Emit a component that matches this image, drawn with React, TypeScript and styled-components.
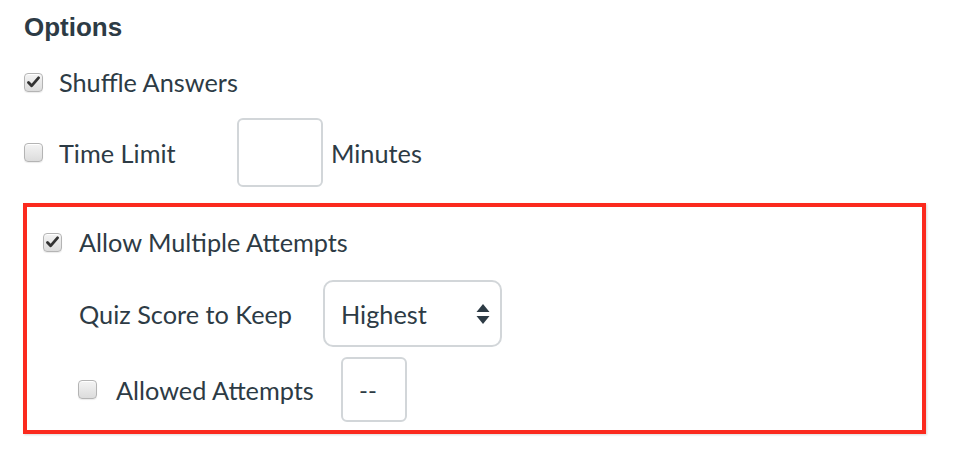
import React from "react";
import styled, { createGlobalStyle } from "styled-components";

const Global = createGlobalStyle`
  html, body { margin: 0; padding: 0; background: #ffffff; }
  body { font-family: Lato, "Noto Sans", sans-serif; color: #2d3b45; }
`;

const Page = styled.div`
  width: 954px;
  height: 450px;
  box-sizing: border-box;
  padding: 12px 0 0 24px;
  display: flex;
  flex-direction: column;
`;

const Heading = styled.h2`
  margin: 0;
  font-family: "Liberation Sans", Arial, sans-serif;
  font-weight: 700;
  font-size: 26px;
  line-height: 30px;
  color: #2d3b45;
`;

const Row = styled.div<{ $h: number; $mt: number; $pl?: number }>`
  display: flex;
  align-items: center;
  height: ${(p) => p.$h}px;
  margin-top: ${(p) => p.$mt}px;
  padding-left: ${(p) => p.$pl ?? 0}px;
`;

const Label = styled.span<{ $gap: number; $w?: number }>`
  font-size: 25.3px;
  line-height: 30px;
  margin-left: ${(p) => p.$gap}px;
  ${(p) => (p.$w ? `width: ${p.$w}px;` : "")}
  white-space: nowrap;
`;

const Box = styled.span`
  width: 19px;
  height: 19px;
  box-sizing: border-box;
  border: 1px solid #b4b4b4;
  border-radius: 4px;
  background: linear-gradient(#f4f4f4, #dcdcdc);
  box-shadow: inset 0 1px 0 #fff, 0 1px 1px rgba(0, 0, 0, 0.08);
  display: inline-flex;
  align-items: center;
  justify-content: center;
  flex: none;
`;

const TextBox = styled.div<{ $w: number; $h: number }>`
  width: ${(p) => p.$w}px;
  height: ${(p) => p.$h}px;
  box-sizing: border-box;
  border: 2px solid #d2d6d9;
  border-radius: 6px;
  background: #fff;
  display: flex;
  align-items: center;
  padding-left: 16px;
  font-size: 24px;
  color: #2d3b45;
  flex: none;
`;

const After = styled.span`
  font-size: 25.3px;
  margin-left: 8px;
`;

const Highlight = styled.div`
  margin: 16px 0 0 -1px;
  width: 903px;
  height: 231px;
  box-sizing: border-box;
  border: 4px solid #fb2a1e;
  box-shadow: 1px 1px 2px rgba(0, 0, 0, 0.15);
  padding: 15px 0 8px 16px;
  display: flex;
  flex-direction: column;
`;

const Select = styled.div`
  width: 179px;
  height: 67px;
  box-sizing: border-box;
  border: 2px solid #d2d6d9;
  border-radius: 10px;
  display: flex;
  align-items: center;
  justify-content: space-between;
  padding: 0 10px 0 16px;
  font-size: 25.3px;
  background: #fff;
  flex: none;
`;

const Check = () => (
  <svg width="13" height="12" viewBox="0 0 13 12">
    <path d="M1.5 6.5 L4.6 9.8 L11.5 1.8" fill="none" stroke="#333" strokeWidth="2.8" strokeLinecap="round" strokeLinejoin="round" />
  </svg>
);

const Arrows = () => (
  <svg width="14" height="22" viewBox="0 0 14 22">
    <path d="M7 1 L13.5 9 H0.5 Z" fill="#2d3b45" />
    <path d="M7 21 L13.5 13 H0.5 Z" fill="#2d3b45" />
  </svg>
);

export default function App() {
  return (
    <>
      <Global />
      <Page>
        <Heading>Options</Heading>
        <Row $h={40} $mt={20}>
          <Box>
            <Check />
          </Box>
          <Label $gap={16}>Shuffle Answers</Label>
        </Row>
        <Row $h={69} $mt={16}>
          <Box />
          <Label $gap={16} $w={178}>Time Limit</Label>
          <TextBox $w={86} $h={69} />
          <After>Minutes</After>
        </Row>
        <Highlight>
          <Row $h={40} $mt={0}>
            <Box>
              <Check />
            </Box>
            <Label $gap={17}>Allow Multiple Attempts</Label>
          </Row>
          <Row $h={67} $mt={18} $pl={36}>
            <Label $gap={0} $w={244}>Quiz Score to Keep</Label>
            <Select>
              <span>Highest</span>
              <Arrows />
            </Select>
          </Row>
          <Row $h={65} $mt={10} $pl={35}>
            <Box />
            <Label $gap={19} $w={225}>Allowed Attempts</Label>
            <TextBox $w={66} $h={65}>--</TextBox>
          </Row>
        </Highlight>
      </Page>
    </>
  );
}
